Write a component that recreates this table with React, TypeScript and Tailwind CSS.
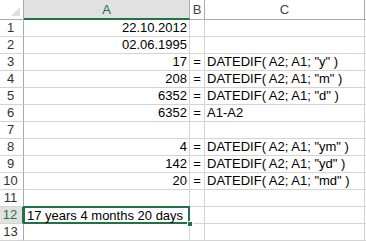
const ROWS: { a: string; b: string; c: string }[] = [
  { a: "22.10.2012", b: "", c: "" },
  { a: "02.06.1995", b: "", c: "" },
  { a: "17", b: "=", c: 'DATEDIF( A2; A1; "y" )' },
  { a: "208", b: "=", c: 'DATEDIF( A2; A1; "m" )' },
  { a: "6352", b: "=", c: 'DATEDIF( A2; A1; "d" )' },
  { a: "6352", b: "=", c: "A1-A2" },
  { a: "", b: "", c: "" },
  { a: "4", b: "=", c: 'DATEDIF( A2; A1; "ym" )' },
  { a: "142", b: "=", c: 'DATEDIF( A2; A1; "yd" )' },
  { a: "20", b: "=", c: 'DATEDIF( A2; A1; "md" )' },
  { a: "", b: "", c: "" },
  { a: "17 years 4 months 20 days", b: "", c: "" },
  { a: "", b: "", c: "" },
];

const cell = "h-[17px] border-r border-b border-[#d4d4d4] overflow-visible whitespace-nowrap leading-[16px]";

export default function App() {
  return (
    <div className="w-[366px] h-[242px] bg-white overflow-hidden text-[13px] text-black" style={{ fontFamily: '"Liberation Sans", Arial, sans-serif' }}>
      <div className="grid grid-cols-[24px_166px_15px_160px_1fr]">
        {/* header row */}
        <div className="relative h-[20px] border-r border-b border-[#ababab] bg-white">
          <div className="absolute right-[3px] bottom-[3px] w-0 h-0 border-l-[9px] border-t-[9px] border-l-transparent border-t-transparent border-r-0 border-b-[9px] border-b-[#dfdfdf]" />
        </div>
        <div className="h-[20px] border-r border-[#ababab] border-b-2 border-b-[#217346] bg-[#e1e1e1] text-center leading-[19px] text-[#217346]">A</div>
        <div className="h-[20px] border-r border-b border-[#ababab] text-center leading-[19px] text-[#444]">B</div>
        <div className="h-[20px] border-r border-b border-[#ababab] text-center leading-[19px] text-[#444]">C</div>
        <div className="h-[20px] border-b border-[#ababab]" />

        {ROWS.map((r, i) => {
          const sel = i === 11;
          return [
            <div
              key={`h${i}`}
              className={`h-[17px] border-b border-r border-[#ababab] border-b-[#d4d4d4] text-center pr-[2px] leading-[16px] ${sel ? "bg-[#e1e1e1] text-[#217346] border-r-[#217346] border-r-2" : "text-[#333]"}`}
            >
              {i + 1}
            </div>,
            sel ? (
              <div key={`a${i}`} className="relative h-[17px] border-b border-r border-[#d4d4d4] overflow-visible whitespace-nowrap">
                <div className="absolute -left-[1px] -top-[1px] -right-[1px] -bottom-[1px] border-2 border-[#217346] pl-[2px] leading-[15px]">{r.a}</div>
                <div className="absolute -right-[4px] -bottom-[4px] w-[6px] h-[6px] bg-[#217346] border border-white" />
              </div>
            ) : (
              <div key={`a${i}`} className={`${cell} text-right pr-[2px]`}>{r.a}</div>
            ),
            <div key={`b${i}`} className={`${cell} text-center`}>{r.b}</div>,
            <div key={`c${i}`} className={`${cell} pl-[2px]`}>{r.c}</div>,
            <div key={`d${i}`} className="h-[17px] border-b border-[#d4d4d4]" />,
          ];
        })}
      </div>
    </div>
  );
}
